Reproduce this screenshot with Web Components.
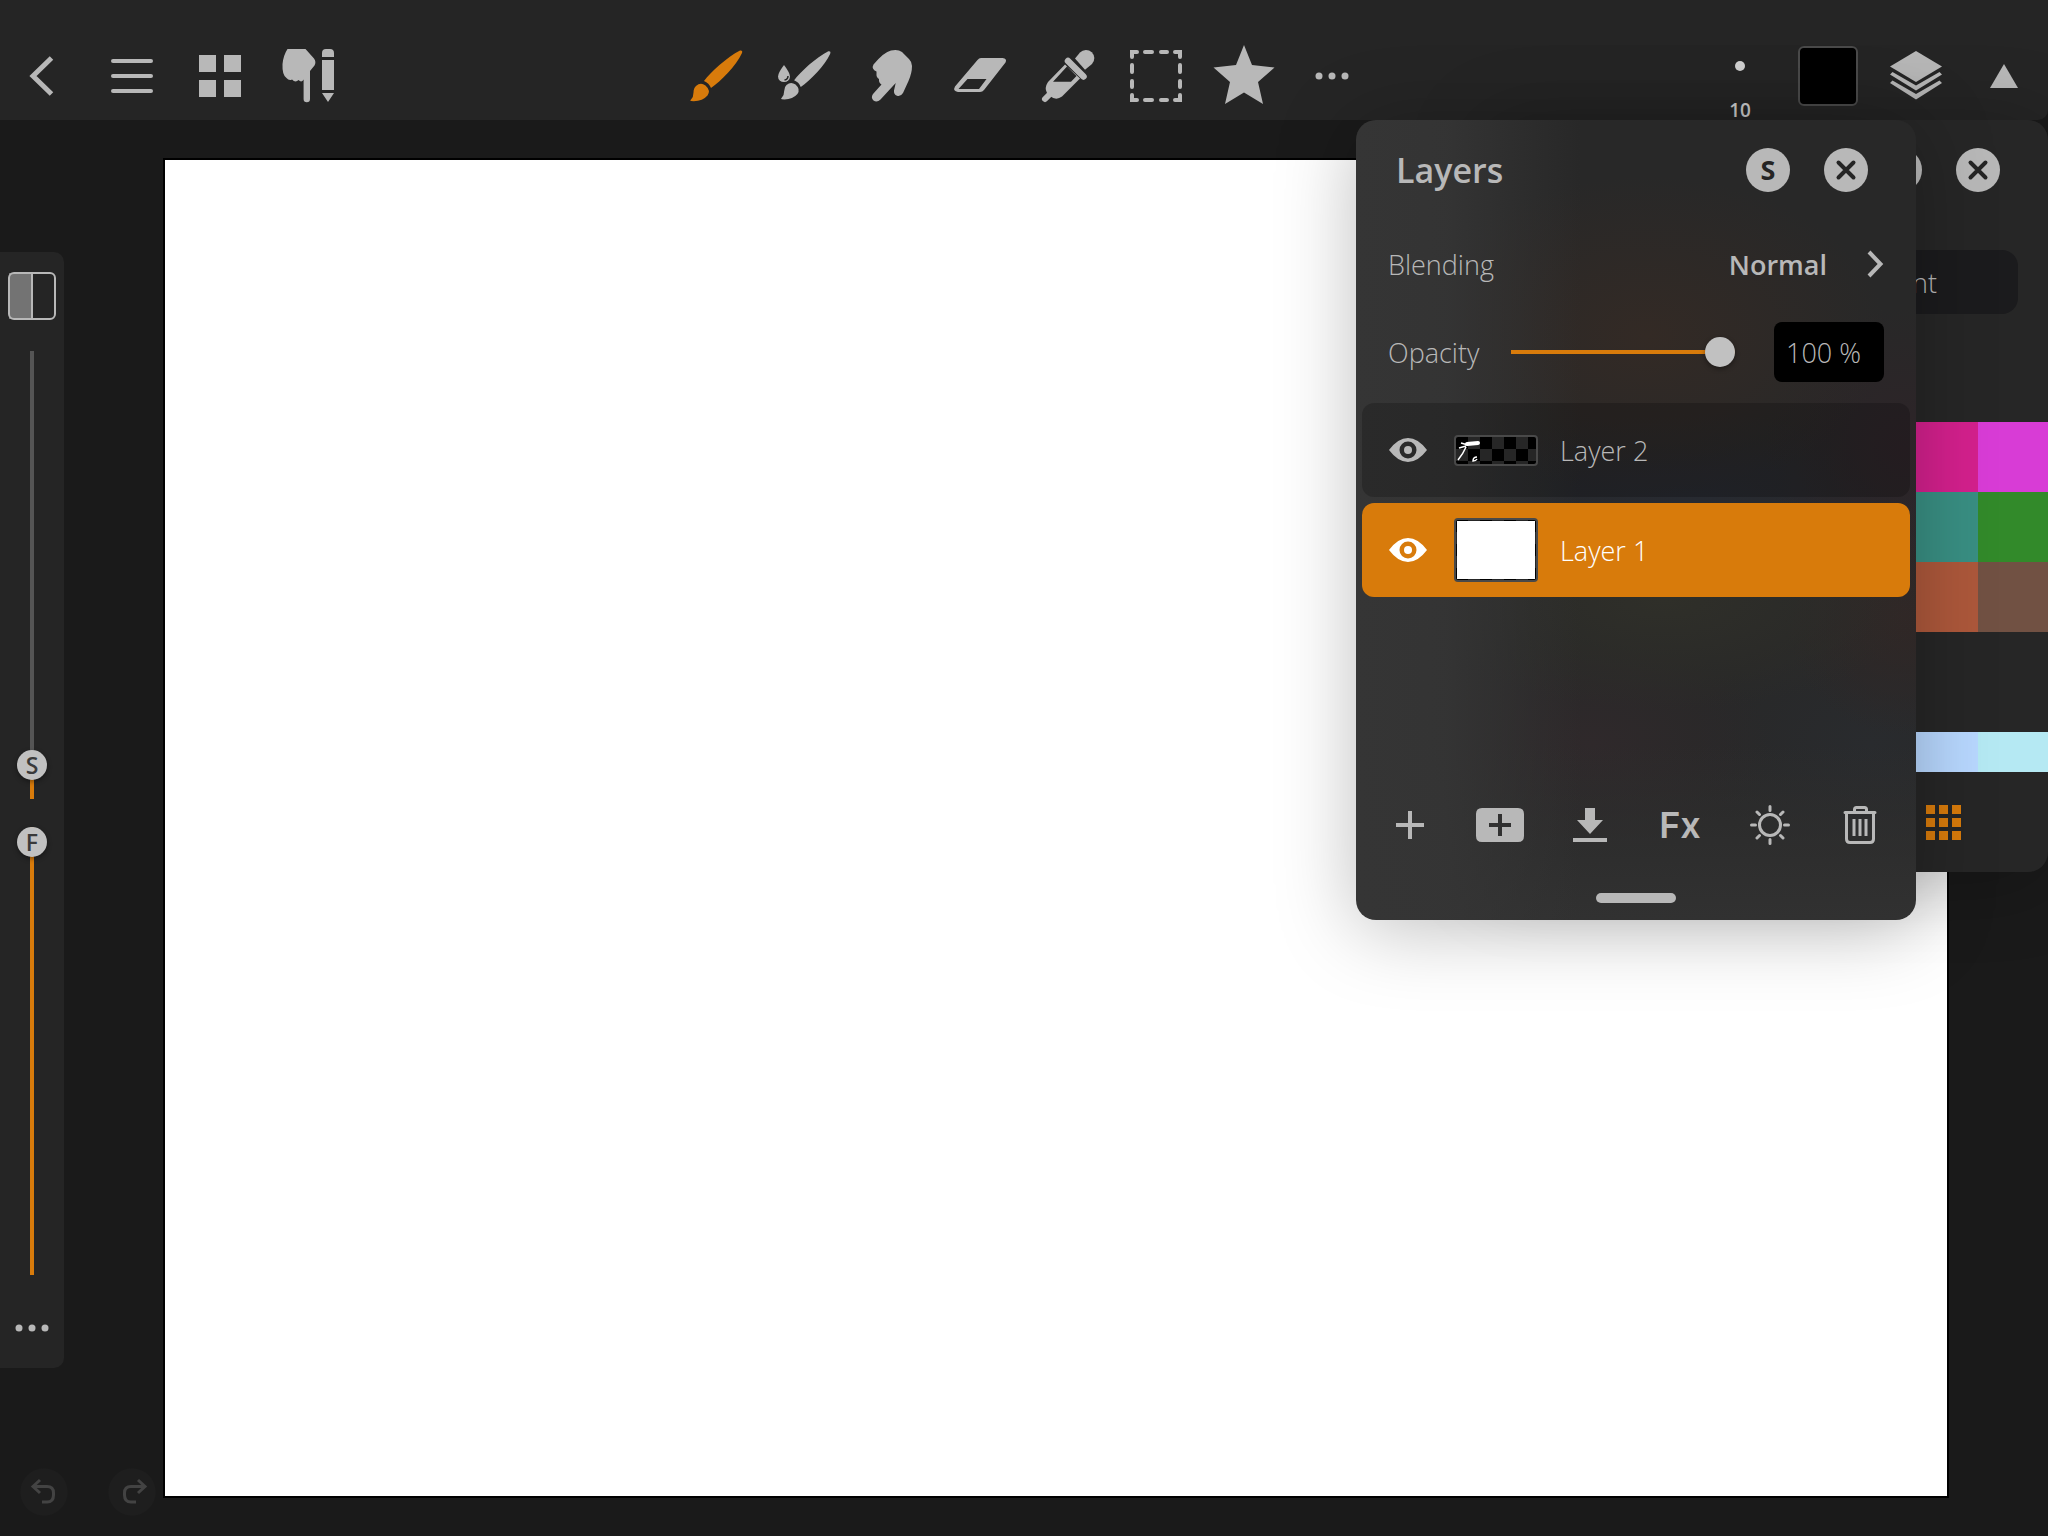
<!DOCTYPE html>
<html lang="en">
<head>
<meta charset="utf-8">
<meta name="viewport" content="width=device-width, initial-scale=1">
<title>Layers</title>
<style>
    html, body {
        height: 100%;
        margin: 0;
    }
    body {
        background: #1a1a1a;
        color: #b8b8b8;
        font-family: "Open Sans", "Noto Sans", sans-serif;
        font-size: 27px;
        font-weight: 300;
        overflow: hidden;
        --accent: #d87b0b;
        --ink: #b8b8b8;
        --bar: #252525;
    }
</style>
</head>
<body>
<paint-app></paint-app>

<script>
// All icons share a 60x60 box
const BRUSH = `
    <path d="M18 35C25 26 41 11 54 4.500Q57 4 56 7C50 20 35 35 25 42Q23 37 18 35Z"/>
    <path d="M10 40Q14.500 36 19.500 39.500 25 44.500 21.500 49.500 16 56 5 55 3.500 54.500 5 53.500 7.500 51 7.500 46.500 7.500 42 10 40Z"/>`;

const DOTS = '<circle cx="17" cy="30" r="3.5"/><circle cx="30" cy="30" r="3.5"/><circle cx="43" cy="30" r="3.5"/>';

const UNDO = '<path d="M26 18L19 24.500 26 31M20 24.500H33Q39.500 24.500 39.500 31V33Q39.500 40 33 40H28" fill="none" stroke="currentColor" stroke-width="3"/>';

const ICONS = {
    back: '<path d="M37.500 12L19 30 37.500 48" fill="none" stroke="currentColor" stroke-width="5"/>',
    menu: '<rect x="9" y="13" width="42" height="4" rx="2"/><rect x="9" y="28" width="42" height="4" rx="2"/><rect x="9" y="43" width="42" height="4" rx="2"/>',
    tiles: '<path d="M9 9h17v17H9zM34 9h17v17H34zM9 34h17v17H9zM34 34h17v17H34z"/>',
    input: `<path d="M9.500 3H27.500L36 12.500Q38.500 16 36.500 19.500L32 25V53a3.200 3.200 0 0 1-6.400 0V33.500Q23.500 37 20.500 34 17.500 37 14 33.500 11 35 8.500 32 4 29 4.500 18 5.500 9 9.500 3Z"/>
        <path d="M44 11V7Q44 3 48 3H52Q56 3 56 7V11ZM44 14H56V44H44ZM44 47H56L50 56Z"/>`,
    brush: BRUSH,
    wet: `<g transform="translate(3 1) scale(.95)">${BRUSH}</g>
        <path d="M10 19Q16 27 16 30.500A6 5.500 0 0 1 4 30.500Q4 27 10 19Z"/>
        <path d="M14 30Q14 33.500 10.500 34" fill="none" stroke="#252525" stroke-width="1.500"/>`,
    smudge: '<path d="M11.500 18.500Q22 6 29 4.500 36 3 40 6L47 13Q50 16 50 20 50 27 46.500 35L41 47Q38.500 51 35 49.800 31.500 48.500 32 44.500L33.700 37 18.500 53.500Q15 57 11.500 54.500 8.500 51.500 11 48L19.500 38.500Q16.500 36.500 17 33 14 31 14.500 27.500V25.500Q9 23 11.500 18.500Z"/>',
    eraser: '<path fill-rule="evenodd" d="M31 12H52.500Q57.500 12.500 55.500 16.500L34 44Q32.500 46 30 46H8Q2.500 45 5 40.500L27.500 14Q29 12 31 12ZM17.500 33L8.500 43H29L36.500 33Z"/>',
    picker: `<path d="M37 12.500L42 6.500A8.300 8.300 0 0 1 54 18L47 23.700Z"/>
        <path d="M30 15L45.500 30.500" stroke="currentColor" stroke-width="6.500" stroke-linecap="round"/>
        <path fill-rule="evenodd" d="M27 18.500L10 36Q6 42 9 47L12 50Q18 55 24 50.500L42 32.500ZM29 20.500L38.500 30 33 35.700H15Z"/>
        <path d="M7 53L12 48" stroke="currentColor" stroke-width="6" stroke-linecap="round"/>`,
    select: '<path d="M6 11V6H11M49 6H54V11M54 49V54H49M11 54H6V49M19 6H26M35 6H41M19 54H26M35 54H41M6 19V26M6 35V41M54 19V26M54 35V41" fill="none" stroke="currentColor" stroke-width="4" stroke-linecap="round"/>',
    star: '<path d="M30-1L38 19 60.500 21.500 44 36 49 58 30 46.500 11 58 16 36-.500 21.500 22 19Z"/>',
    more: DOTS,
    layers: '<path d="M30 5L56 20.500 30 36 4 20.500Z"/><path d="M4 28.500L6.500 26 30 39.500 53.500 26 56 28.500 30 44.500Z"/><path d="M4 37L6.500 34.500 30 48 53.500 34.500 56 37 30 53.500Z"/>',
    up: '<path d="M30 18L44 42H16Z"/>',
    undo: UNDO,
    redo: `<g transform="translate(62 0) scale(-1 1)">${UNDO}</g>`,
    split: '<rect x="7" y="7" width="23" height="46" fill="#737373"/><path d="M30 7V53" stroke="currentColor" stroke-width="2"/><rect x="7" y="7" width="46" height="46" rx="5" fill="none" stroke="currentColor" stroke-width="2"/>',
    close: '<circle cx="30" cy="30" r="22"/><path d="M22.500 22.500L37.500 37.500M37.500 22.500L22.500 37.500" stroke="#252525" stroke-width="4" stroke-linecap="round"/>',
    disc: '<circle cx="30" cy="30" r="22"/>',
    next: '<path d="M24 18L35.500 30 24 42" fill="none" stroke="currentColor" stroke-width="4"/>',
    eye: '<path fill-rule="evenodd" d="M11 30Q20 18 30 18 40 18 49 30 40 42 30 42 20 42 11 30ZM30 21.500A8.500 8.500 0 1 0 30 38.500 8.500 8.500 0 1 0 30 21.500Z"/><circle cx="30" cy="30" r="4"/>',
    plus: '<path d="M28 16h4v12h12v4H32v12h-4V32H16v-4h12z"/>',
    group: '<path fill-rule="evenodd" d="M12 13H48Q54 13 54 19V41Q54 47 48 47H12Q6 47 6 41V19Q6 13 12 13ZM28 19V28H19V32H28V41H32V32H41V28H32V19Z"/>',
    merge: '<path d="M25 13H35V25H43L30 39 17 25H25ZM13 43H47V47H13Z"/>',
    adjust: '<g fill="none" stroke="currentColor" stroke-width="3" stroke-linecap="round"><circle cx="30" cy="30" r="10.500"/><path d="M30 11.500V15.500M30 44.500V48.500M11.500 30H15.500M44.500 30H48.500M17 17L19.500 19.500M40.500 40.500L43 43M43 17L40.500 19.500M19.500 40.500L17 43"/></g>',
    trash: '<g fill="none" stroke="currentColor" stroke-width="3" stroke-linecap="round"><path d="M15 17.500H45M24.500 16.500V14.500Q24.500 12.500 26.500 12.500H34.500Q36.500 12.500 36.500 14.500V16.500M16.500 18.500V44Q16.500 47.500 20 47.500H40Q43.500 47.500 43.500 44V18.500"/><path d="M24 24V41M30 24V41M36 24V41" stroke-linecap="butt"/></g>',
    palette: '<path d="M12 12h9v9h-9zM25 12h9v9h-9zM38 12h9v9h-9zM12 25h9v9h-9zM25 25h9v9h-9zM38 25h9v9h-9zM12 38h9v9h-9zM25 38h9v9h-9zM38 38h9v9h-9z"/>'
};

const BUTTON_RESET = `
    button {
        display: grid;
        place-items: center;
        padding: 0;
        border: 0;
        background: none;
        color: inherit;
        font: inherit;
        cursor: pointer;
    }
`;

class Base extends HTMLElement {
    constructor() {
        super();
        this.attachShadow({ mode: 'open' });
    }

    connectedCallback() {
        this.render();
    }
}

// <icon-button icon label> draws one icon, a slotted text can lie over it
class IconButton extends Base {
    render() {
        this.shadowRoot.innerHTML = `
            <style>
                :host {
                    display: block;
                    flex: none;
                    width: 88px;
                    height: 88px;
                }
                ${BUTTON_RESET}
                button {
                    grid-template: 100% / 100%;
                    width: 100%;
                    height: 100%;
                }
                svg, ::slotted(*) {
                    grid-area: 1 / 1;
                }
                svg {
                    width: 60px;
                    height: 60px;
                    fill: currentColor;
                    overflow: visible;
                }
            </style>
            <button type="button" aria-label="${this.getAttribute('label')}">
                <svg viewBox="0 0 60 60" aria-hidden="true">${ICONS[this.getAttribute('icon')] || ''}</svg>
                <slot></slot>
            </button>
        `;
    }
}

class BrushSize extends Base {
    render() {
        this.shadowRoot.innerHTML = `
            <style>
                :host {
                    display: block;
                    width: 88px;
                    height: 88px;
                }
                ${BUTTON_RESET}
                button {
                    width: 100%;
                    height: 100%;
                    grid-template-rows: 68px 20px;
                    color: #d2d2d2;
                    font-size: 19px;
                    font-weight: 600;
                    line-height: 20px;
                }
                i {
                    width: 10px;
                    height: 10px;
                    border-radius: 50%;
                    background: currentColor;
                }
            </style>
            <button type="button"><i></i><span><slot></slot></span></button>
        `;
    }
}

class ColorSwatch extends Base {
    render() {
        this.shadowRoot.innerHTML = `
            <style>
                :host {
                    display: grid;
                    place-items: center;
                    width: 88px;
                    height: 88px;
                }
                button {
                    width: 60px;
                    height: 60px;
                    padding: 0;
                    border: 2px solid #4b4b4b;
                    border-radius: 6px;
                    background: ${this.getAttribute('color')};
                }
            </style>
            <button type="button" aria-label="Colour"></button>
        `;
    }
}

class TopBar extends Base {
    render() {
        this.shadowRoot.innerHTML = `
            <style>
                :host {
                    display: grid;
                    grid-template-columns: 1fr auto 1fr;
                    padding-top: 32px;
                    background: var(--bar);
                    border-radius: 0 0 10px 0;
                }
                nav {
                    display: flex;
                }
                nav:last-child {
                    justify-content: flex-end;
                }
                .active {
                    color: var(--accent);
                }
            </style>
            <nav>
                <icon-button icon="back" label="Back"></icon-button>
                <icon-button icon="menu" label="Menu"></icon-button>
                <icon-button icon="tiles" label="Workspace"></icon-button>
                <icon-button icon="input" label="Input"></icon-button>
            </nav>
            <nav>
                <icon-button class="active" icon="brush" label="Brush"></icon-button>
                <icon-button icon="wet" label="Wet brush"></icon-button>
                <icon-button icon="smudge" label="Smudge"></icon-button>
                <icon-button icon="eraser" label="Eraser"></icon-button>
                <icon-button icon="picker" label="Colour picker"></icon-button>
                <icon-button icon="select" label="Selection"></icon-button>
                <icon-button icon="star" label="Favourites"></icon-button>
                <icon-button icon="more" label="More tools"></icon-button>
            </nav>
            <nav>
                <brush-size>10</brush-size>
                <color-swatch color="#000"></color-swatch>
                <icon-button icon="layers" label="Layers"></icon-button>
                <icon-button icon="up" label="Collapse"></icon-button>
            </nav>
        `;
    }
}

// Vertical slider with a letter on its thumb
class LevelSlider extends Base {
    render() {
        const value = this.getAttribute('value');
        this.shadowRoot.innerHTML = `
            <style>
                :host {
                    display: flex;
                    position: relative;
                    flex: 1 1 0;
                    min-height: 0;
                    width: 30px;
                    --value: ${value};
                }
                input {
                    appearance: none;
                    writing-mode: vertical-lr;
                    direction: rtl;
                    width: 30px;
                    min-height: 0;
                    margin: 0;
                    border-radius: 2px;
                    background: linear-gradient(to top, var(--accent) calc(var(--value) * 1%), #555 0) center / 4px 100% no-repeat;
                }
                input::-webkit-slider-thumb {
                    appearance: none;
                    width: 30px;
                    height: 30px;
                    border-radius: 50%;
                    background: #c1c1c1;
                    box-shadow: 0 2px 5px rgba(0, 0, 0, .4);
                }
                label {
                    position: absolute;
                    left: 0;
                    bottom: calc((100% - 30px) * var(--value) / 100);
                    width: 30px;
                    line-height: 30px;
                    text-align: center;
                    font-size: 23px;
                    font-weight: 600;
                    color: #3a3a3a;
                    pointer-events: none;
                }
            </style>
            <input id="level" type="range" step="0.5" value="${value}">
            <label for="level"><slot></slot></label>
        `;
        const input = this.shadowRoot.querySelector('input');
        input.addEventListener('input', () => {
            this.style.setProperty('--value', input.value);
        });
    }
}

class SideRail extends Base {
    render() {
        this.shadowRoot.innerHTML = `
            <style>
                :host {
                    display: flex;
                    flex-direction: column;
                    align-items: center;
                    gap: 28px;
                    width: 64px;
                    box-sizing: border-box;
                    padding: 17px 0 10px;
                    background: var(--bar);
                    border-radius: 0 10px 10px 0;
                }
                icon-button {
                    width: 54px;
                    height: 54px;
                }
                .more {
                    height: 60px;
                    margin-top: -5px;
                }
            </style>
            <icon-button icon="split" label="Mode"></icon-button>
            <level-slider value="4.5">S</level-slider>
            <level-slider value="100">F</level-slider>
            <icon-button class="more" icon="more" label="More"></icon-button>
        `;
    }
}

class UndoBar extends Base {
    render() {
        this.shadowRoot.innerHTML = `
            <style>
                :host {
                    display: flex;
                    color: #434343;
                }
                icon-button {
                    background: radial-gradient(circle, #1e1e1e 23px, transparent 24px);
                }
            </style>
            <icon-button icon="undo" label="Undo"></icon-button>
            <icon-button icon="redo" label="Redo"></icon-button>
        `;
    }
}

// Floating panel: title and actions on top, content below
class FloatPanel extends Base {
    render() {
        this.shadowRoot.innerHTML = `
            <style>
                :host {
                    display: flex;
                    flex-direction: column;
                    width: 560px;
                    border-radius: 20px;
                    overflow: hidden;
                }
                header {
                    display: flex;
                    align-items: center;
                    gap: 34px;
                    flex: none;
                    height: 100px;
                    padding: 0 48px 0 40px;
                }
                h2 {
                    flex: 1;
                    margin: 0;
                    font-size: 34px;
                    font-weight: 600;
                }
                icon-button {
                    width: 44px;
                    height: 44px;
                }
                b {
                    font-size: 27px;
                    font-weight: 700;
                    line-height: 44px;
                    color: #252525;
                }
            </style>
            <header>
                <h2>${this.getAttribute('title') || ''}</h2>
                <icon-button icon="disc" label="Dock">${this.hasAttribute('letter') ? `<b>${this.getAttribute('letter')}</b>` : ''}</icon-button>
                <icon-button icon="close" label="Close"></icon-button>
            </header>
            <slot></slot>
        `;
    }
}

class ColorPanel extends Base {
    render() {
        const colors = ['#d4208d', '#d83cd6', '#398f83', '#328a2a', '#ad583b', '#715143'];
        const history = ['#b8d8ff', '#b5e9f3'];
        this.shadowRoot.innerHTML = `
            <style>
                :host {
                    display: block;
                }
                float-panel {
                    height: 752px;
                    background: #262626;
                }
                .swatches {
                    display: grid;
                    grid-template-columns: 70px 70px;
                    grid-auto-rows: 70px;
                    justify-content: end;
                }
                .history {
                    grid-auto-rows: 40px;
                    margin-top: 100px;
                }
                ${BUTTON_RESET}
                .tab {
                    flex: none;
                    height: 64px;
                    margin: 30px 30px 108px;
                    padding-right: 81px;
                    justify-items: end;
                    border-radius: 16px;
                    background: #1b1b1d;
                }
                footer {
                    display: flex;
                    justify-content: flex-end;
                    padding: 7px 60px 0;
                    color: var(--accent);
                }
            </style>
            <float-panel>
                <button class="tab" type="button">nt</button>
                <div class="swatches">
                    ${colors.map(c => `<button type="button" aria-label="${c}" style="background:${c}"></button>`).join('')}
                </div>
                <div class="swatches history">
                    ${history.map(c => `<button type="button" aria-label="${c}" style="background:${c}"></button>`).join('')}
                </div>
                <footer><icon-button icon="palette" label="Palette"></icon-button></footer>
            </float-panel>
        `;
    }
}

class LayerRow extends Base {
    render() {
        this.shadowRoot.innerHTML = `
            <style>
                :host {
                    display: flex;
                    align-items: center;
                    height: 94px;
                    padding-left: 16px;
                    border-radius: 12px;
                    background: rgba(0, 0, 0, .2);
                }
                :host([selected]) {
                    background: var(--accent);
                    color: #fff;
                }
                icon-button {
                    width: 60px;
                }
                ${BUTTON_RESET}
                .name {
                    display: flex;
                    align-items: center;
                    flex: 1;
                    gap: 22px;
                    height: 100%;
                    margin-left: 16px;
                }
            </style>
            <icon-button icon="eye" label="Visible"></icon-button>
            <button class="name" type="button"><slot name="thumb"></slot><slot></slot></button>
        `;
    }
}

class LayerThumb extends Base {
    render() {
        this.shadowRoot.innerHTML = `
            <style>
                :host {
                    display: block;
                    box-sizing: border-box;
                    width: 84px;
                    height: 64px;
                    border: 2px solid #494949;
                    border-radius: 4px;
                    background: conic-gradient(#262626 25%, #000 0 50%, #262626 0 75%, #000 0) 0 0 / 24px 24px;
                }
                :host([fill]) {
                    padding: 1px;
                }
                div {
                    height: 100%;
                    background: #fff;
                }
            </style>
            ${this.hasAttribute('fill') ? '<div></div>' : '<slot></slot>'}
        `;
    }
}

class LayersPanel extends Base {
    render() {
        this.shadowRoot.innerHTML = `
            <style>
                :host {
                    display: block;
                    border-radius: 20px;
                    box-shadow: 0 8px 80px rgba(0, 0, 0, .26);
                }
                float-panel {
                    height: 800px;
                    background:
                        linear-gradient(to right, #353535 0, rgba(53, 53, 53, .9) 16%, rgba(53, 53, 53, 0) 40%),
                        linear-gradient(to top, #313131 0, rgba(49, 49, 49, 0) 22%),
                        radial-gradient(240px 160px at 52% 27%, #332a25, rgba(51, 42, 37, 0)),
                        radial-gradient(140px 140px at 98% 41%, #2d2428, rgba(45, 36, 40, 0)),
                        radial-gradient(300px 90px at 60% 48%, #272a31, rgba(39, 42, 49, 0)),
                        radial-gradient(260px 110px at 55% 60%, #2f2f29, rgba(47, 47, 41, 0)),
                        radial-gradient(120px 120px at 98% 62%, #302726, rgba(48, 39, 38, 0)),
                        radial-gradient(180px 110px at 42% 78%, #2f292b, rgba(47, 41, 43, 0)),
                        radial-gradient(180px 120px at 92% 78%, #292b2e, rgba(41, 43, 46, 0)),
                        #282828;
                }
                .field {
                    display: flex;
                    align-items: center;
                    height: 88px;
                    padding: 0 32px;
                }
                .field select {
                    flex: 1;
                    height: 60px;
                    padding: 0 29px 0 0;
                    border: 0;
                    background: none;
                    appearance: none;
                    color: inherit;
                    font: inherit;
                    font-weight: 600;
                    text-align-last: right;
                }
                .field svg {
                    width: 60px;
                    height: 60px;
                    margin: 0 -21px 0 -11px;
                }
                input[type=range] {
                    appearance: none;
                    flex: 1;
                    height: 30px;
                    margin: 0 39px 0 32px;
                    background: linear-gradient(var(--accent), var(--accent)) center / 100% 4px no-repeat;
                }
                input[type=range]::-webkit-slider-thumb {
                    appearance: none;
                    width: 30px;
                    height: 30px;
                    border-radius: 50%;
                    background: #c1c1c1;
                    box-shadow: 0 2px 5px rgba(0, 0, 0, .4);
                }
                input[type=text] {
                    box-sizing: border-box;
                    width: 110px;
                    height: 60px;
                    padding: 0 12px;
                    border: 0;
                    border-radius: 8px;
                    background: #000;
                    color: inherit;
                    font: inherit;
                }
                .list {
                    display: flex;
                    flex-direction: column;
                    flex: 1;
                    gap: 6px;
                    padding: 7px 6px 0;
                }
                footer {
                    display: grid;
                    grid-template-columns: repeat(6, 1fr);
                    justify-items: center;
                    padding: 0 11px 0 9px;
                }
                .fx {
                    font-family: Inter, "Liberation Sans", sans-serif;
                    font-size: 36px;
                    font-weight: 600;
                }
                .grip {
                    flex: none;
                    align-self: center;
                    width: 80px;
                    height: 10px;
                    margin: 24px 0 17px;
                    border-radius: 5px;
                    background: var(--ink);
                }
            </style>
            <float-panel title="Layers" letter="S">
                <div class="field">
                    <label for="blending">Blending</label>
                    <select id="blending"><option>Normal</option></select>
                    <svg viewBox="0 0 60 60" aria-hidden="true">${ICONS.next}</svg>
                </div>
                <div class="field">
                    <label for="opacity">Opacity</label>
                    <input id="opacity" type="range" value="100">
                    <input type="text" value="100 %" aria-label="Opacity value">
                </div>
                <div class="list">
                    <layer-row>
                        <layer-thumb slot="thumb" style="height: 31px">
                            <svg width="80" height="27" viewBox="0 0 80 27" fill="none" stroke="#fff" style="display: block">
                                <path d="M11 7L22 6" stroke-width="4" stroke-linecap="round"/>
                                <path d="M5 6L12 8M3 11L10 9M10 10Q7 17 2 23" stroke-width="1.500"/>
                                <path d="M21 20Q17 20 17 24 20 24 21 22" stroke-width="1.500"/>
                            </svg>
                        </layer-thumb>
                        Layer 2
                    </layer-row>
                    <layer-row selected>
                        <layer-thumb slot="thumb" fill></layer-thumb>
                        Layer 1
                    </layer-row>
                </div>
                <footer>
                    <icon-button icon="plus" label="Add layer"></icon-button>
                    <icon-button icon="group" label="Add group"></icon-button>
                    <icon-button icon="merge" label="Merge down"></icon-button>
                    <icon-button label="Effects"><span class="fx">Fx</span></icon-button>
                    <icon-button icon="adjust" label="Adjust"></icon-button>
                    <icon-button icon="trash" label="Delete"></icon-button>
                </footer>
                <div class="grip"></div>
            </float-panel>
        `;
    }
}

class PaintApp extends Base {
    render() {
        this.shadowRoot.innerHTML = `
            <style>
                :host {
                    display: flex;
                    flex-direction: column;
                    height: 100%;
                }
                main {
                    display: flex;
                    flex: 1;
                    min-height: 0;
                    position: relative;
                }
                aside {
                    display: flex;
                    flex-direction: column;
                    gap: 80px;
                    width: 163px;
                    padding-top: 132px;
                }
                side-rail {
                    flex: 1;
                    min-height: 0;
                }
                .canvas {
                    flex: 1;
                    margin: 38px 99px 38px 0;
                    border: 2px solid #000;
                    background: #fff;
                }
                /* Panels float over the canvas */
                color-panel, layers-panel {
                    position: absolute;
                    top: 0;
                    right: 0;
                }
                color-panel {
                    border-radius: 20px;
                    box-shadow: 0 8px 80px rgba(0, 0, 0, .26);
                }
                layers-panel {
                    right: 132px;
                }
            </style>
            <top-bar></top-bar>
            <main>
                <aside>
                    <side-rail></side-rail>
                    <undo-bar></undo-bar>
                </aside>
                <div class="canvas"></div>
                <color-panel></color-panel>
                <layers-panel></layers-panel>
            </main>
        `;
    }
}

customElements.define('icon-button', IconButton);
customElements.define('brush-size', BrushSize);
customElements.define('color-swatch', ColorSwatch);
customElements.define('top-bar', TopBar);
customElements.define('level-slider', LevelSlider);
customElements.define('side-rail', SideRail);
customElements.define('undo-bar', UndoBar);
customElements.define('float-panel', FloatPanel);
customElements.define('color-panel', ColorPanel);
customElements.define('layer-row', LayerRow);
customElements.define('layer-thumb', LayerThumb);
customElements.define('layers-panel', LayersPanel);
customElements.define('paint-app', PaintApp);
</script>
</body>
</html>
